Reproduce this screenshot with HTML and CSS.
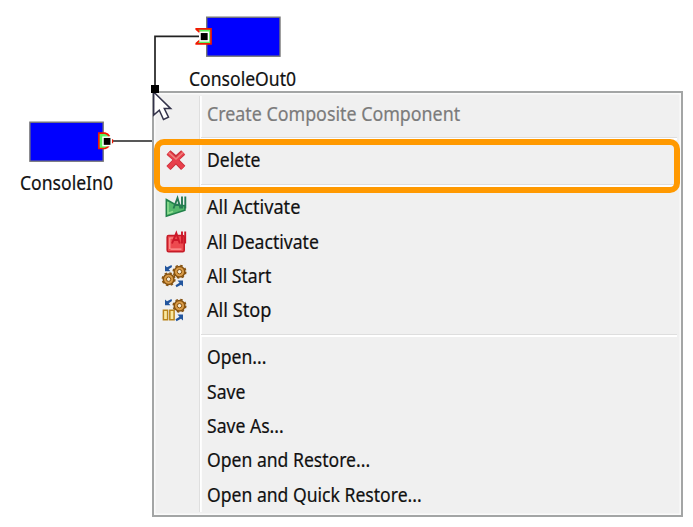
FILE: index.html
```html
<!DOCTYPE html>
<html lang="en">
<head>
<meta charset="utf-8">
<title>System diagram</title>
<link rel="stylesheet" href="styles.css">
</head>
<body>
<main class="canvas">
  <svg class="diagram" width="693" height="200" viewBox="0 0 693 200" aria-hidden="true">
    <g fill="#00f" stroke="#777" stroke-width="1.4">
      <rect x="206.7" y="17.2" width="73.3" height="39"/>
      <rect x="29.9" y="122.2" width="73.3" height="39"/>
    </g>
    <path d="M199 36.3H155V86M112 141H154" fill="none" stroke="#222" stroke-width="1.7"/>
    <path d="M196.2 28.8H211v15H196.2L200.5 39V33.5Z" fill="#5cf05c"/>
    <path d="M195.4 28.8H211v15H195.4M196 29l4.6 4M196 43.6l4.6-4" fill="none" stroke="#f21800" stroke-width="1.7"/>
    <path d="M98.8 133.2h6.7q3.2 1 4.2 4v7.5q-1 3-4.2 4h-6.7Z" fill="#5cf05c"/>
    <path d="M109.5 136.5q-1.5-2.6-4.5-3.3H98.8v15.3h6.2q3-.7 4.5-3.3M112.3 139.2v4" fill="none" stroke="#f21800" stroke-width="1.7"/>
    <g stroke="#fff" stroke-width="1.5">
      <rect x="200" y="32.3" width="8.4" height="8.6"/>
      <rect x="103" y="137.2" width="8.2" height="8.4"/>
    </g>
  </svg>
  <span class="label node-name out">ConsoleOut0</span>
  <span class="label node-name in">ConsoleIn0</span>

  <nav class="menu">
    <div class="item disabled"><span class="icon"></span><span class="label">Create Composite Component</span></div>
    <hr>
    <div class="item"><span class="icon"><svg width="24" height="24" viewBox="0 0 24 24"><path d="M4.5 4.5L12 11l7.2-6.5M4.5 20L12 12.5l7.2 7.3" fill="none" stroke="#c8303a" stroke-width="6" stroke-linejoin="round"/><path d="M4.5 4.5L19.2 19.8M19.2 4.5L4.5 20" fill="none" stroke="#e8404c" stroke-width="4"/><path d="M5 4.8l7 6.2 6.8-6.3" fill="none" stroke="#ee7f7c" stroke-width="1.6"/></svg></span><span class="label">Delete</span></div>
    <hr>
    <div class="item wide"><span class="icon"><svg width="24" height="24" viewBox="0 0 24 24"><path d="M2.3 4.5L12 10l9 .8v4.4L2.3 21.3Z" fill="#55b96c" stroke="#21814a" stroke-width="1.5"/><path d="M4 7v11.5l5-2" fill="none" stroke="#90dd91" stroke-width="1.5"/><path d="M9.5 13.5l4-10.5 3 10.5M11 9.7h5M18 1.5v12M21.3 1.5v12" fill="none" stroke="#267a52" stroke-width="1.9"/></svg></span><span class="label">All Activate</span></div>
    <div class="item"><span class="icon"><svg width="24" height="24" viewBox="0 0 24 24"><rect x="3.2" y="5.5" width="17" height="16.3" rx="1.5" fill="#ed4a4f" stroke="#c51c28" stroke-width="1.6"/><path d="M5.8 19V8h4M6.5 19.2h11" fill="none" stroke="#ff9b98" stroke-width="1.2"/><path d="M8 13.5L12.3 3l3.5 10.5M9.5 10h5.5M18 1.5v12M21.2 1.5v12" fill="none" stroke="#cc1829" stroke-width="1.9"/></svg></span><span class="label">All Deactivate</span></div>
    <div class="item"><span class="icon gears"><svg width="26" height="26" viewBox="0 0 26 26">
      <defs>
        <g id="gear"><circle r="5.3" fill="#d99b48" stroke="#86520f" stroke-width="1.5"/><circle r="6.3" fill="none" stroke="#86520f" stroke-width="1.5" stroke-dasharray="2.5 2.45"/><circle r="2.2" fill="#f5ead5" stroke="#86520f"/></g>
        <g id="arrows" fill="#22559d"><path d="M4 2.5l2 1.8L10.5 2 11 4 7.7 6.2 9.5 8.3H4Z"/><path d="M22 23.5l-2-1.8-4.5 2.5-1-2 4-2.4-2-2.3H22Z"/></g>
      </defs>
      <use href="#arrows"/><use href="#gear" x="18.5" y="8.7"/><use href="#gear" x="7.6" y="16.2"/></svg></span><span class="label">All Start</span></div>
    <div class="item wide"><span class="icon gears"><svg width="26" height="26" viewBox="0 0 26 26"><use href="#arrows"/><use href="#gear" x="18.5" y="8.7"/><path d="M2.4 13.2h4.2v9.6H2.4ZM8.8 13.2h4.3v9.6H8.8Z" fill="#fae8a0" stroke="#b9841b" stroke-width="1.5"/></svg></span><span class="label">All Stop</span></div>
    <hr>
    <div class="item"><span class="icon"></span><span class="label">Open...</span></div>
    <div class="item"><span class="icon"></span><span class="label">Save</span></div>
    <div class="item"><span class="icon"></span><span class="label">Save As...</span></div>
    <div class="item"><span class="icon"></span><span class="label">Open and Restore...</span></div>
    <div class="item"><span class="icon"></span><span class="label">Open and Quick Restore...</span></div>
  </nav>

  <div class="highlight"></div>
  <svg class="pointer" width="24" height="38" viewBox="0 0 24 38" aria-hidden="true">
    <path d="M3.7 8v23l5.6-4.8 4.2 9.3 5-2.3-4.2-8.6h6.4Z" fill="#fff" stroke="#33334a" stroke-width="1.5"/>
    <rect x="1" y="1" width="8" height="8"/>
  </svg>
</main>
</body>
</html>
```
FILE: styles.css
```css
* { box-sizing: border-box; }
body { margin: 0; background: #fff; }

.canvas {
  position: relative;
  width: 693px;
  height: 527px;
  overflow: hidden;
  font-family: "Noto Sans", "Open Sans", sans-serif;
  font-size: 19px;
  line-height: 26px;
  color: #111;
}
.diagram { position: absolute; left: 0; top: 0; }

.label {
  display: inline-block;
  white-space: nowrap;
  transform: scaleX(.925);
  transform-origin: 0 50%;
  -webkit-text-stroke: .2px currentColor;
}
.node-name { position: absolute; }
.out { left: 188.5px; top: 66px; }
.in { left: 19.5px; top: 170px; }

.menu {
  position: absolute;
  left: 152px;
  top: 91px;
  width: 531px;
  height: 426px;
  padding-top: 3.5px;
  border: 2px solid #a3a5a5;
  background: linear-gradient(90deg, #dfdfdf 1.3px, #fff 1.3px) 45px 3px / 2.8px 416px no-repeat #f0f0f0;
  box-shadow: inset 0 0 0 1.5px #fafafa;
}
.item {
  display: flex;
  align-items: center;
  height: 34.4px;
}
.icon {
  display: flex;
  justify-content: center;
  width: 43px;
  margin-right: 10px;
}
.gears svg { margin-right: 3px; }
.disabled { color: #7b7b7b; }
.disabled .label { transform: scaleX(.938); }
.wide .label { transform: scaleX(.955); }
.menu hr {
  height: 2.6px;
  margin: 6.4px 4px 3.4px 47px;
  border: 0;
  border-top: 1.3px solid #dedede;
  background: #fff;
}

.highlight {
  position: absolute;
  left: 154px;
  top: 139px;
  width: 526px;
  height: 54px;
  border: 6px solid #ff9900;
  border-radius: 10px;
}
.pointer { position: absolute; left: 150px; top: 84px; }
```
